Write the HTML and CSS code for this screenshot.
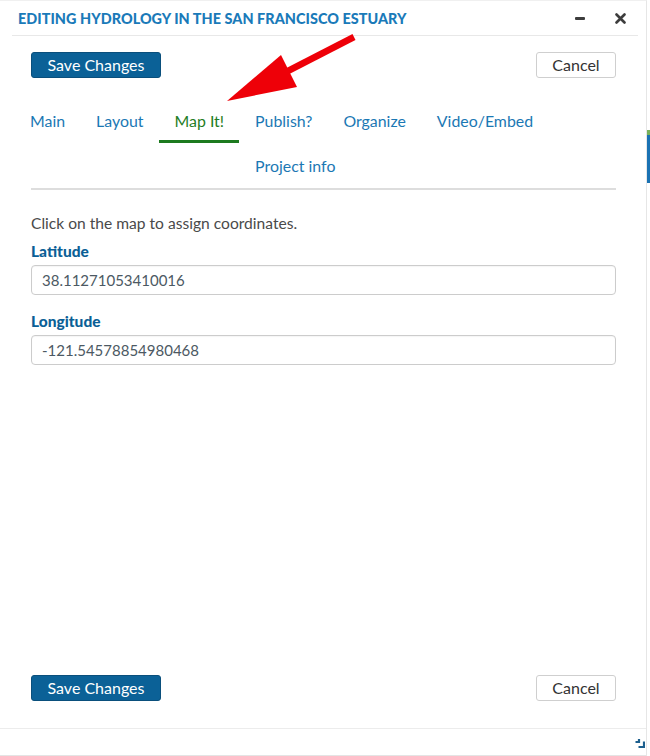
FILE: index.html
```html
<!DOCTYPE html>
<html lang="en">
<head>
<meta charset="utf-8">
<title>Editing Hydrology in the San Francisco Estuary</title>
<link rel="stylesheet" href="styles.css">
</head>
<body>
<div class="page">
  <div class="dialog">
    <header class="dialog-header">
      <h1 class="dialog-title">EDITING HYDROLOGY IN THE SAN FRANCISCO ESTUARY</h1>
      <div class="window-controls">
        <span class="ctrl-min"></span>
        <svg class="ctrl-close" width="11" height="11" viewBox="0 0 11 11"><path d="M1.5 1.5 L9.5 9.5 M9.5 1.5 L1.5 9.5" stroke="#3d3d3d" stroke-width="2.6" stroke-linecap="round"/></svg>
      </div>
    </header>
    <div class="dialog-body">
      <div class="actions">
        <button class="btn btn-primary">Save Changes</button>
        <button class="btn btn-default">Cancel</button>
      </div>
      <div class="tabs-wrap">
        <nav class="tabs">
          <a class="tab">Main</a>
          <a class="tab">Layout</a>
          <a class="tab active">Map It!</a>
          <a class="tab">Publish?</a>
          <a class="tab">Organize</a>
          <a class="tab">Video/Embed</a>
          <a class="tab tab-wrap">Project info</a>
        </nav>
      </div>
      <p class="hint">Click on the map to assign coordinates.</p>
      <label class="field-label">Latitude</label>
      <div class="input">38.11271053410016</div>
      <label class="field-label field-gap">Longitude</label>
      <div class="input">-121.54578854980468</div>
      <div class="actions actions-bottom">
        <button class="btn btn-primary">Save Changes</button>
        <button class="btn btn-default">Cancel</button>
      </div>
    </div>
    <footer class="dialog-footer">
      <svg class="resize" width="10" height="10" viewBox="0 0 10 10"><path d="M0.5 4 H4 V1 M3.5 9 H9 V3.5" fill="none" stroke="#1d5f8e" stroke-width="2.2"/></svg>
    </footer>
    <svg class="arrow" width="140" height="80" viewBox="220 30 140 80">
      <line x1="354" y1="37" x2="284" y2="73" stroke="#ee0008" stroke-width="6.5"/>
      <polygon points="227,101 281,55 297,87" fill="#ee0008"/>
    </svg>
  </div>
  <div class="backdrop-strip">
    <span class="strip-green"></span>
    <span class="strip-blue"></span>
  </div>
</div>
</body>
</html>
```
FILE: styles.css
```css
* { box-sizing: border-box; }
html, body { margin: 0; padding: 0; background: #fff; }
body {
  font-family: Lato, "Open Sans", "Liberation Sans", sans-serif;
  color: #4a4a4a;
}
.page {
  display: flex;
  height: 756px;
  overflow: hidden;
}
.dialog {
  position: relative;
  width: 647px;
  height: 756px;
  display: flex;
  flex-direction: column;
  border-right: 1px solid #e6e6e6;
  border-top: 1px solid #f0f0f0;
}
.dialog-header {
  display: flex;
  align-items: center;
  justify-content: space-between;
  height: 35px;
  margin: 0 8px 0 12px;
  padding: 1px 12px 0 6px;
  border-bottom: 1px solid #e8e8e8;
}
.dialog-title {
  margin: 0;
  font-size: 14.4px;
  font-weight: 900;
  color: #1a7ab9;
  letter-spacing: 0.05px;
}
.window-controls {
  display: flex;
  align-items: center;
  gap: 30px;
}
.ctrl-min {
  display: block;
  width: 10px;
  height: 3px;
  background: #3d3d3d;
  border-radius: 1px;
}
.ctrl-close { display: block; }
.dialog-body {
  flex: 1;
  display: flex;
  flex-direction: column;
  padding: 16px 30px 0 31px;
}
.actions {
  display: flex;
  justify-content: space-between;
  align-items: center;
}
.btn {
  font-family: Lato, "Open Sans", "Liberation Sans", sans-serif;
  font-size: 16px;
  height: 26px;
  border-radius: 3px;
  padding: 0;
  line-height: 24px;
}
.btn-primary {
  width: 130px;
  background: #0b6197;
  color: #fff;
  border: 1px solid #0a4f7c;
}
.btn-default {
  width: 80px;
  background: #fff;
  color: #333;
  border: 1px solid #cfcfcf;
}
.tabs-wrap {
  margin-top: 20px;
  border-bottom: 2px solid #dddddd;
}
.tabs {
  display: grid;
  grid-template-columns: repeat(6, auto);
  justify-content: start;
  margin-left: -17px;
}
.tab {
  display: block;
  font-size: 15.9px;
  line-height: 20px;
  padding: 13px 15px 9px 16px;
  color: #1b78b4;
  border-bottom: 3px solid transparent;
  white-space: nowrap;
}
.tab.active {
  color: #1f7d24;
  border-bottom-color: #1d7a1f;
}
.tab-wrap {
  grid-column: 4 / span 3;
  justify-self: start;
}
.hint {
  margin: 23px 0 0;
  font-size: 15.6px;
  line-height: 20px;
  color: #4a4a4a;
}
.field-label {
  display: block;
  margin-top: 8px;
  font-size: 15.5px;
  line-height: 20px;
  font-weight: 900;
  color: #0b5f96;
}
.field-gap { margin-top: 16px; }
.input {
  margin-top: 4px;
  height: 30px;
  border: 1px solid #cccccc;
  border-radius: 4px;
  padding: 0 10px;
  font-size: 15px;
  line-height: 28px;
  color: #4c5963;
  box-shadow: inset 0 1px 1px rgba(0,0,0,0.04);
}
.actions-bottom {
  margin-top: auto;
  margin-bottom: 27px;
}
.dialog-footer {
  height: 28px;
  border-top: 1px solid #ececec;
  border-bottom: 1px solid #e4e4e4;
  display: flex;
  justify-content: flex-end;
  align-items: flex-end;
  padding: 0 1px 7px 0;
}
.resize { display: block; }
.arrow {
  position: absolute;
  left: 220px;
  top: 29px;
}
.backdrop-strip {
  width: 3px;
  display: flex;
  flex-direction: column;
  padding-top: 130px;
}
.strip-green { height: 5px; background: #79b15a; }
.strip-blue { height: 48px; background: #1a72b3; }
```
